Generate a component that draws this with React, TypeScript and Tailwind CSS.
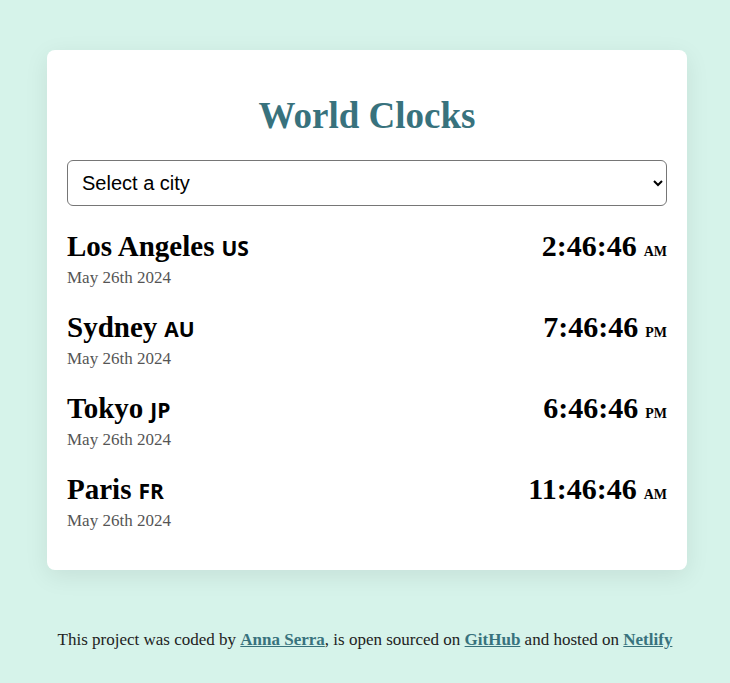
import React from 'react';

interface CityClock {
  name: string;
  code: string;
  date: string;
  time: string;
  period: string;
}

const clocks: CityClock[] = [
  { name: 'Los Angeles', code: 'US', date: 'May 26th 2024', time: '2:46:46', period: 'AM' },
  { name: 'Sydney', code: 'AU', date: 'May 26th 2024', time: '7:46:46', period: 'PM' },
  { name: 'Tokyo', code: 'JP', date: 'May 26th 2024', time: '6:46:46', period: 'PM' },
  { name: 'Paris', code: 'FR', date: 'May 26th 2024', time: '11:46:46', period: 'AM' },
];

const serif = "font-['Liberation_Serif','DejaVu_Serif',serif]";

export default function App() {
  return (
    <div className={`min-h-[683px] bg-[#d6f3ea] pt-[50px] ${serif}`}>
      <div className="ml-[47px] w-[640px] rounded-lg bg-white px-5 pt-[28px] pb-[20px] shadow-[0_6px_24px_rgba(0,0,0,0.08)]">
        <h1 className="mb-[6px] text-center text-[37px] font-bold leading-[76px] text-[#38727d]">
          World Clocks
        </h1>
        <select className="h-[46px] w-full rounded-md border border-[#767676] bg-white px-[10px] font-['Liberation_Sans',Arial,sans-serif] text-[20px] text-black">
          <option>Select a city</option>
        </select>
        <div className="mt-[20px] flex flex-col">
          {clocks.map(c => (
            <div key={c.name} className="flex h-[81px] items-start justify-between">
              <div>
                <div className="flex items-baseline gap-[7px] text-[29px] font-bold leading-[40px] text-black">
                  {c.name}
                  <span className="font-['Open_Sans','DejaVu_Sans',sans-serif] text-[21px] font-bold">{c.code}</span>
                </div>
                <div className="text-[17px] leading-[20px] text-[#555]">{c.date}</div>
              </div>
              <div className="flex items-baseline gap-[7px] text-[30px] font-bold leading-[40px] text-black">
                {c.time}
                <span className="text-[14px] font-bold">{c.period}</span>
              </div>
            </div>
          ))}
        </div>
      </div>
      <p className="mt-[57px] text-center text-[17px] text-[#222]">
        This project was coded by{' '}
        <a href="#" className="font-bold text-[#38727d] underline">Anna Serra</a>, is open sourced on{' '}
        <a href="#" className="font-bold text-[#38727d] underline">GitHub</a> and hosted on{' '}
        <a href="#" className="font-bold text-[#38727d] underline">Netlify</a>
      </p>
    </div>
  );
}
